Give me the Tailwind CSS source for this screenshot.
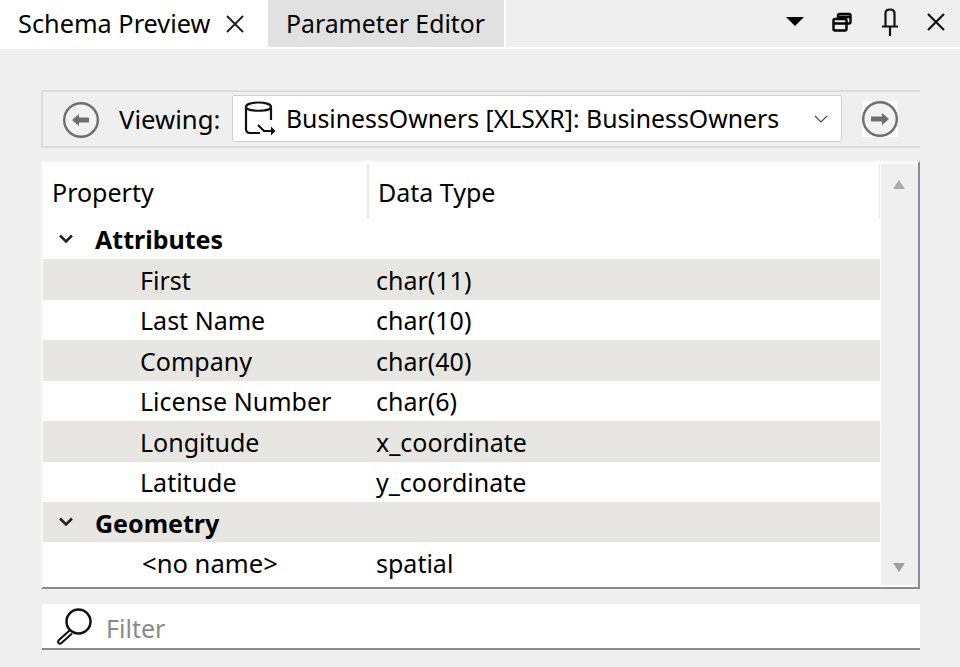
<!DOCTYPE html>
<html>
<head>
<meta charset="utf-8">
<script src="https://cdn.jsdelivr.net/npm/@tailwindcss/browser@4"></script>
</head>
<body class="m-0">
<div class="w-[960px] h-[667px] bg-[#efefef] overflow-hidden flex flex-col font-['Noto_Sans','Open_Sans',sans-serif] text-[25px] text-black">
  <!-- tab bar -->
  <div class="h-[49px] shrink-0 flex border-b-2 border-white">
    <div class="w-[268px] h-[47px] bg-white flex items-center pl-[18px] gap-[15px]">
      <span class="leading-none whitespace-nowrap text-[25.300px]">Schema Preview</span>
      <svg width="20" height="20" viewBox="0 0 20 20" class="shrink-0"><path d="M2 2L18 18M18 2L2 18" stroke="#222" stroke-width="2" fill="none"/></svg>
    </div>
    <div class="w-[236px] h-[47px] bg-[#e1e1e1] flex items-center pl-[18px]"><span class="leading-none whitespace-nowrap text-[24.800px]">Parameter Editor</span></div>
    <div class="w-[2px] h-[47px] bg-white"></div>
    <div class="flex-1 h-[47px] flex items-start">
      <svg width="20" height="11" viewBox="0 0 20 11" class="ml-[279px] mt-[16px] shrink-0"><path d="M1 1H19L10 10Z" fill="#000"/></svg>
      <svg width="20" height="20" viewBox="0 0 20 20" class="ml-[27px] mt-[12px] shrink-0"><path d="M6 6V3.500Q6 2 7.500 2H17Q18.500 2 18.500 3.500V10Q18.500 11.500 17 11.500H14.500M3 7H13Q14.500 7 14.500 8.500V17Q14.500 18.500 13 18.500H3Q1.500 18.500 1.500 17V8.500Q1.500 7 3 7ZM1.500 11.500H14.500M6 5H18.500" stroke="#000" stroke-width="2.400" fill="none"/></svg>
      <svg width="18" height="28" viewBox="0 0 18 28" class="ml-[29px] mt-[8px] shrink-0"><path d="M4.500 18V5.500Q4.500 1.500 9 1.500Q13.500 1.500 13.500 5.500V18M1 18.500H17M9 18V28" stroke="#111" stroke-width="2.200" fill="none"/></svg>
      <svg width="20" height="20" viewBox="0 0 20 20" class="ml-[27px] mt-[12px] shrink-0"><path d="M2 2L18 18M18 2L2 18" stroke="#111" stroke-width="2.200" fill="none"/></svg>
    </div>
  </div>

  <!-- toolbar -->
  <div class="mt-[41px] ml-[41px] w-[879px] h-[58px] shrink-0 border-y-2 border-l-2 border-[#dcdcdc] flex items-center">
    <svg width="38" height="38" viewBox="0 0 38 38" class="ml-[19px] mt-[1px] shrink-0"><circle cx="19" cy="19" r="16.800" fill="#f2f2f2" stroke="#6e6e6e" stroke-width="2.400"/><path d="M10 19L17 13V16.500H27V21.500H17V25Z" fill="#6e6e6e"/></svg>
    <span class="ml-[19px] w-[113px] mt-[1px] leading-none whitespace-nowrap text-[25.700px]">Viewing:</span>
    <div class="w-[610px] h-[47px] bg-white border border-[#d0d0d0] rounded-[2px] flex items-center relative -mt-[2px]">
      <svg width="34" height="36" viewBox="0 0 34 36" class="ml-[10px] shrink-0"><path d="M3 7V29Q3 33 7 33H17M28 20V7M3 7C3 1 28 1 28 7C28 12 3 12 3 7Z" stroke="#111" stroke-width="2.200" fill="none"/><path d="M15 25L21 31H31" stroke="#111" stroke-width="2.200" fill="none"/><path d="M28 26.500L32.500 31L28 35.500Z" fill="#111"/></svg>
      <span class="ml-[9px] leading-none whitespace-nowrap text-[24.800px]">BusinessOwners [XLSXR]: BusinessOwners</span>
      <svg width="14" height="8" viewBox="0 0 14 8" class="absolute right-[13px] top-[19px]"><path d="M1 1L7 7L13 1" stroke="#444" stroke-width="1.100" fill="none"/></svg>
    </div>
    <div class="ml-[20px] w-[36px] h-[36px] bg-white shrink-0">
      <svg width="36" height="36" viewBox="0 0 36 36"><circle cx="18" cy="18" r="16.800" fill="#f2f2f2" stroke="#6e6e6e" stroke-width="2.400"/><path d="M27 18L20 12V15.500H9V20.500H20V24Z" fill="#6e6e6e"/></svg>
    </div>
  </div>

  <!-- table -->
  <div class="mt-[13px] ml-[41px] w-[879px] h-[428px] shrink-0 border-t-2 border-l-2 border-r-2 border-b-2 border-t-[#f8f8f8] border-l-[#f8f8f8] border-r-[#8a8a90] border-b-[#8a8a90] flex bg-white">
    <div class="w-[837px] shrink-0 flex flex-col">
      <div class="h-[55px] flex shrink-0 border-r border-[#e8e8e8] mt-[1px]">
        <div class="w-[326px] border-r-2 border-[#e8e8e8] pl-[9px] pt-[1px] flex items-center"><span class="leading-none">Property</span></div>
        <div class="pl-[9px] pt-[1px] flex items-center"><span class="leading-none">Data Type</span></div>
      </div>
      <div class="h-[40px] flex items-center shrink-0 font-bold">
        <svg width="16" height="10" viewBox="0 0 16 10" class="ml-[15px]"><path d="M2 1.500L8 7.500L14 1.500" stroke="#222" stroke-width="2.600" fill="none"/></svg>
        <span class="ml-[21px] leading-none">Attributes</span>
      </div>
      <div class="h-[40.500px] pt-[2px] flex items-center bg-[#e8e6e3] shrink-0"><span class="ml-[97px] w-[236px] leading-none">First</span><span class="leading-none">char(11)</span></div>
      <div class="h-[40.500px] pt-[2px] flex items-center shrink-0"><span class="ml-[97px] w-[236px] leading-none">Last Name</span><span class="leading-none">char(10)</span></div>
      <div class="h-[40.500px] pt-[2px] flex items-center bg-[#e8e6e3] shrink-0"><span class="ml-[97px] w-[236px] leading-none">Company</span><span class="leading-none">char(40)</span></div>
      <div class="h-[40.500px] pt-[2px] flex items-center shrink-0"><span class="ml-[97px] w-[236px] leading-none">License Number</span><span class="leading-none">char(6)</span></div>
      <div class="h-[40.500px] pt-[2px] flex items-center bg-[#e8e6e3] shrink-0"><span class="ml-[97px] w-[236px] leading-none">Longitude</span><span class="leading-none">x_coordinate</span></div>
      <div class="h-[40.500px] pt-[2px] flex items-center shrink-0"><span class="ml-[97px] w-[236px] leading-none">Latitude</span><span class="leading-none">y_coordinate</span></div>
      <div class="h-[40px] flex items-center bg-[#e8e6e3] shrink-0 font-bold">
        <svg width="16" height="10" viewBox="0 0 16 10" class="ml-[15px]"><path d="M2 1.500L8 7.500L14 1.500" stroke="#222" stroke-width="2.600" fill="none"/></svg>
        <span class="ml-[21px] mt-[3px] leading-none">Geometry</span>
      </div>
      <div class="h-[41px] pt-[2px] flex items-center shrink-0"><span class="ml-[99px] w-[234px] leading-none text-[25.600px]">&lt;no name&gt;</span><span class="leading-none">spatial</span></div>
    </div>
    <div class="ml-[1px] w-[37px] mb-[2px] mt-[1px] bg-[#efefef] relative shrink-0">
      <svg width="12" height="9" viewBox="0 0 12 9" class="absolute left-[12px] top-[16px]"><path d="M6 0L12 9H0Z" fill="#ababab"/></svg>
      <svg width="12" height="9" viewBox="0 0 12 9" class="absolute left-[12px] bottom-[13px]"><path d="M0 0H12L6 9Z" fill="#a0a0a0"/></svg>
    </div>
  </div>

  <!-- filter -->
  <div class="mt-[15px] ml-[42px] w-[878px] h-[46px] shrink-0 bg-white border-b-2 border-[#8a8a8a] flex items-center">
    <svg width="38" height="38" viewBox="0 0 38 38" class="ml-[13px] shrink-0"><circle cx="23.500" cy="14.500" r="12" stroke="#111" stroke-width="2.500" fill="none"/><path d="M14.500 23.500L3.500 33.500Q2.500 35 3.500 36Q5 37.500 6.500 36L17 26.500" stroke="#111" stroke-width="2" fill="none"/></svg>
    <span class="ml-[13px] mt-[5px] leading-none text-[#8a8a8a]">Filter</span>
  </div>
</div>
</body>
</html>
